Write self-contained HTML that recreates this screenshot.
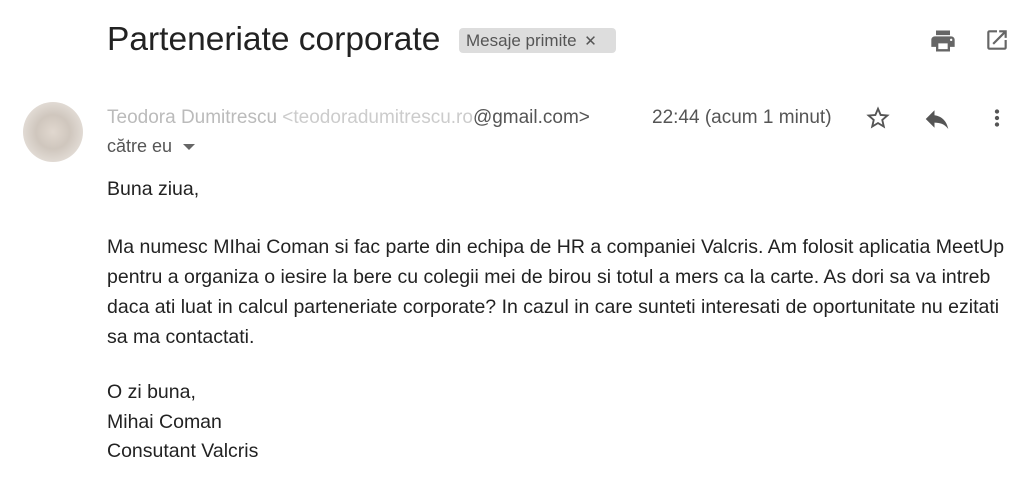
<!DOCTYPE html>
<html><head><meta charset="utf-8"><style>
body{margin:0;width:1034px;height:490px;background:#fff;font-family:"Liberation Sans",sans-serif;position:relative;overflow:hidden;color:#222}
.a{position:absolute;white-space:nowrap}
.b{position:absolute;left:107px;font-size:19.5px;line-height:30px;color:#222;white-space:nowrap}
</style></head><body>
<div class="a" style="left:107px;top:21px;font-size:33.5px;color:#222">Parteneriate corporate</div>
<div class="a" style="left:459px;top:28px;width:157px;height:25px;background:#ddd;border-radius:4px;font-size:17px;color:#555;line-height:25px;padding-left:7px;box-sizing:border-box">Mesaje primite <span style="font-size:15px;margin-left:3px">✕</span></div>
<svg class="a" style="left:929px;top:27px" width="28" height="28" viewBox="0 0 24 24"><path fill="#666" d="M19 8H5c-1.66 0-3 1.34-3 3v6h4v4h12v-4h4v-6c0-1.66-1.340-3-3-3zm-3 11H8v-5h8v5zm3-7c-.55 0-1-.45-1-1s.45-1 1-1 1 .45 1 1-.45 1-1 1zm-1-9H6v4h12V3z"/></svg>
<svg class="a" style="left:984px;top:27px" width="26" height="26" viewBox="0 0 24 24"><path fill="#666" d="M19 19H5V5h7V3H5c-1.11 0-2 .9-2 2v14c0 1.1.89 2 2 2h14c1.1 0 2-.9 2-2v-7h-2v7zM14 3v2h3.59l-9.83 9.83 1.41 1.41L19 6.41V10h2V3h-7z"/></svg>
<div class="a" style="left:23px;top:102px;width:60px;height:60px;border-radius:50%;background:radial-gradient(circle,#c8b8a8 0,#a89888 40%,#e8e0d8 100%);opacity:.55"></div>
<div class="a" style="left:107px;top:107px;font-size:19px;color:#bbb">Teodora Dumitrescu <span style="color:#ccc">&lt;teodoradumitrescu.ro</span><span style="color:#555">@gmail.com&gt;</span></div>
<div class="a" style="left:107px;top:136px;font-size:18px;color:#555">către eu <span style="display:inline-block;width:0;height:0;border-left:6px solid transparent;border-right:6px solid transparent;border-top:6px solid #666;vertical-align:middle;margin-left:6px"></span></div>
<div class="a" style="left:652px;top:107px;font-size:19px;color:#555">22:44 (acum 1 minut)</div>
<svg class="a" style="left:864px;top:104px" width="28" height="28" viewBox="0 0 24 24"><path fill="#555" d="M22 9.24l-7.19-.62L12 2 9.19 8.63 2 9.24l5.46 4.73L5.82 21 12 17.27 18.18 21l-1.63-7.03L22 9.24zM12 15.4l-3.760 2.27 1-4.28-3.32-2.88 4.38-.38L12 6.1l1.710 4.04 4.38.38-3.32 2.88 1 4.28L12 15.4z"/></svg>
<svg class="a" style="left:922px;top:104px" width="30" height="30" viewBox="0 0 24 24"><path fill="#555" d="M10 9V5l-7 7 7 7v-4.1c5 0 8.5 1.6 11 5.1-1-5-4-10-11-11z"/></svg>
<svg class="a" style="left:984px;top:104px" width="26" height="28" viewBox="0 0 24 24"><path fill="#555" d="M12 8c1.1 0 2-.9 2-2s-.9-2-2-2-2 .9-2 2 .9 2 2 2zm0 2c-1.1 0-2 .9-2 2s.9 2 2 2 2-.9 2-2-.9-2-2-2zm0 6c-1.1 0-2 .9-2 2s.9 2 2 2 2-.9 2-2-.9-2-2-2z"/></svg>
<div class="b" style="top:174px">Buna ziua,</div>
<div class="b" style="top:232px">Ma numesc MIhai Coman si fac parte din echipa de HR a companiei Valcris. Am folosit aplicatia MeetUp<br>
pentru a organiza o iesire la bere cu colegii mei de birou si totul a mers ca la carte. As dori sa va intreb<br>
daca ati luat in calcul parteneriate corporate? In cazul in care sunteti interesati de oportunitate nu ezitati<br>
sa ma contactati.</div>
<div class="b" style="top:378px;line-height:29.5px">O zi buna,<br>Mihai Coman<br>Consutant Valcris</div>
</body></html>
